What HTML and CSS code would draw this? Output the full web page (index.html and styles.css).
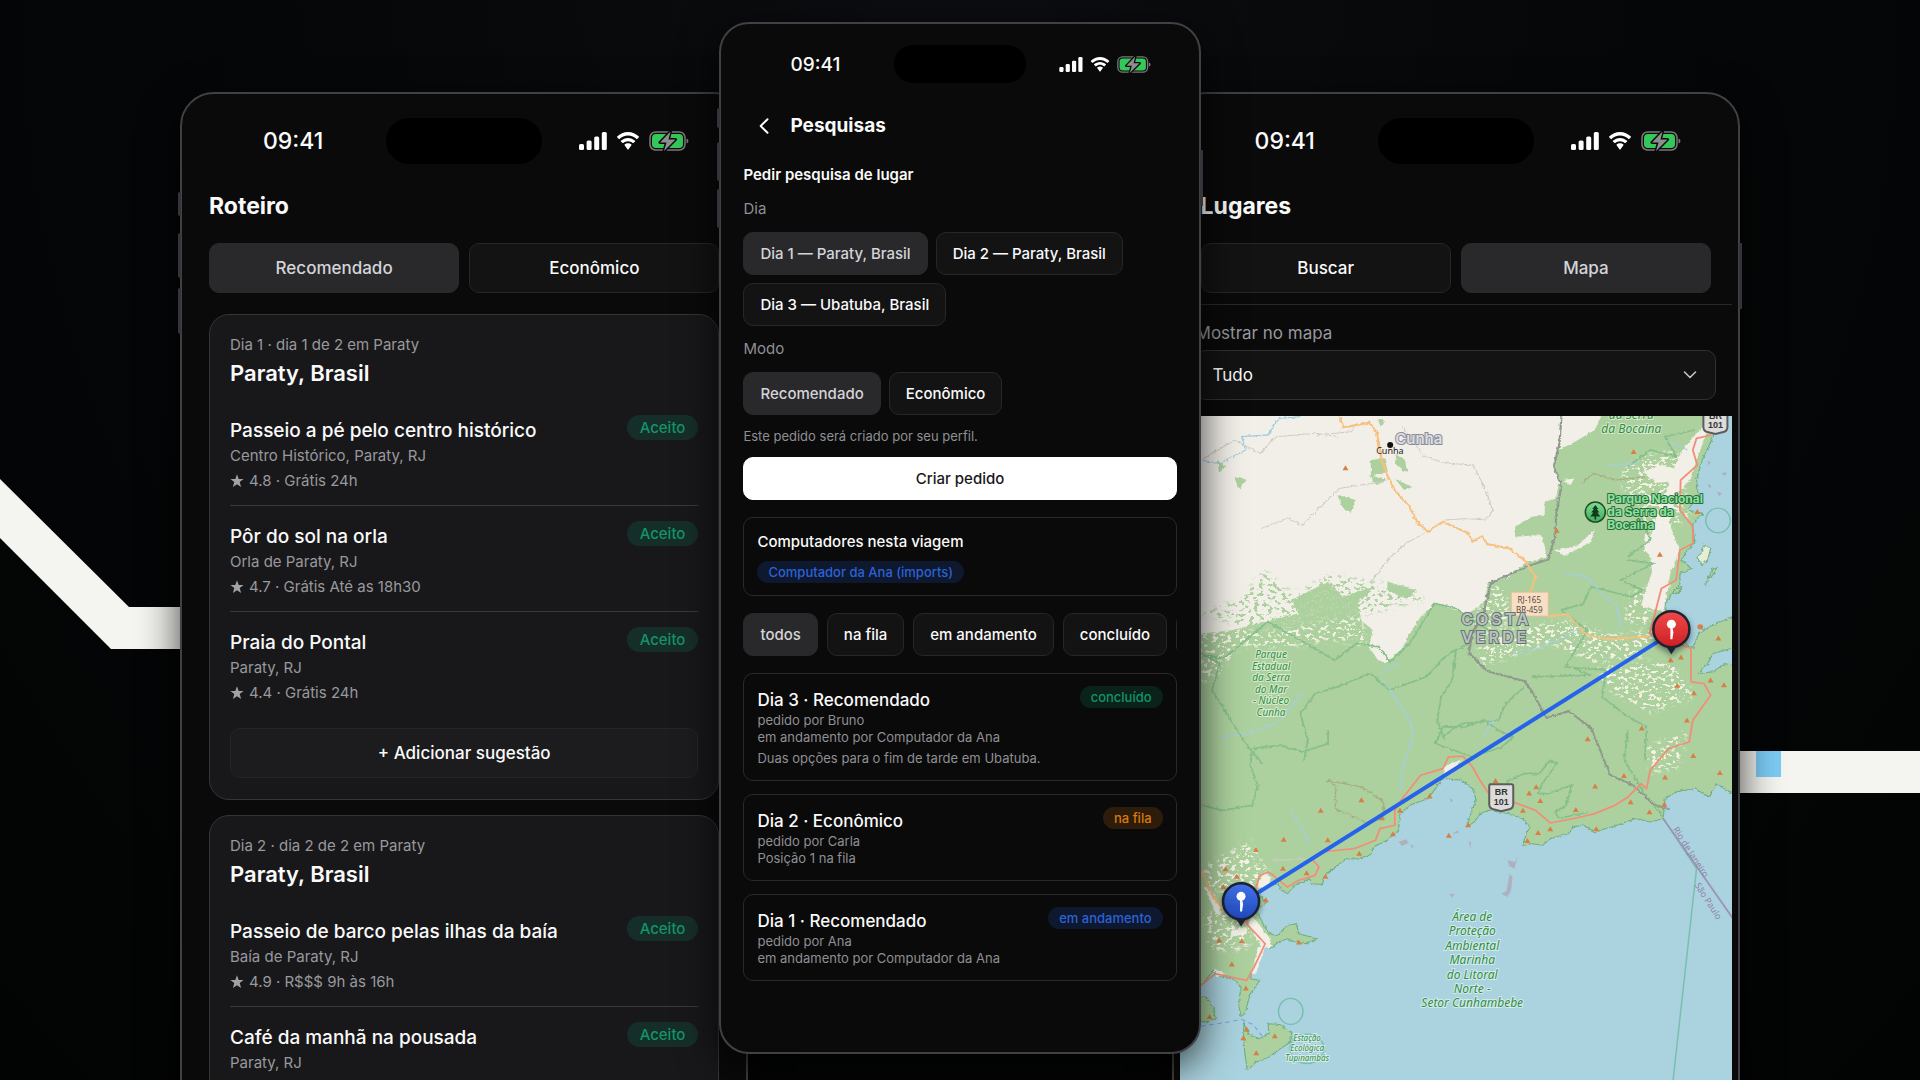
FILE: index.html
```html
<!DOCTYPE html>
<html lang="pt-BR">
<head>
<meta charset="utf-8">
<meta name="viewport" content="width=device-width, initial-scale=1">
<title>Roteiro, Pesquisas e Lugares</title>
<link rel="stylesheet" href="styles.css">
</head>
<body>
<svg class="defs" width="0" height="0" aria-hidden="true">
  <symbol id="signal" viewBox="0 0 28 18">
    <rect x="0" y="12" width="5" height="6" rx="1.5"/><rect x="7.600" y="8.500" width="5" height="9.500" rx="1.500"/><rect x="15.200" y="4.500" width="5" height="13.500" rx="1.500"/><rect x="22.800" y="0" width="5" height="18" rx="1.500"/>
  </symbol>
  <symbol id="wifi" viewBox="0 0 24 18">
    <path d="M12 3.600c3.300 0 6.300 1.300 8.500 3.400.2.200.5.200.7 0l1.700-1.700c.2-.2.2-.5 0-.7C20 1.800 16.200 0 12 0S4 1.800 1.100 4.600c-.2.200-.2.500 0 .7L2.800 7c.2.200.5.200.7 0C5.700 4.900 8.700 3.600 12 3.600zM12 9.300c1.800 0 3.400.7 4.700 1.800.2.200.5.200.7 0l1.700-1.700c.2-.2.2-.5 0-.7-1.900-1.700-4.400-2.800-7.100-2.800s-5.200 1.100-7.100 2.800c-.2.200-.2.500 0 .7l1.700 1.700c.2.200.5.200.7 0 1.300-1.100 2.900-1.800 4.700-1.800zM15.400 12.600c.2.200.2.500 0 .7l-3 4.200c-.2.200-.6.200-.8 0l-3-4.200c-.2-.2-.2-.5 0-.7.900-.8 2.100-1.300 3.400-1.300s2.500.5 3.400 1.300z"/>
  </symbol>
  <symbol id="battery" viewBox="0 0 40 20">
    <rect x="1" y="1" width="35" height="18" rx="5.500" fill="none" stroke="#7a7a7c" stroke-width="1.500"/>
    <path d="M37.500 7.500c1.300.4 1.900 1.300 1.900 2.500s-.6 2.100-1.900 2.500z" fill="#7a7a7c"/>
    <rect x="3" y="3" width="31" height="14" rx="3.800" fill="#34c759"/>
    <path d="M21.500.5l-10.500 11h6.500l-2.500 8.500 11.500-11.500h-7z" fill="#8d8d90" stroke="#0a0a0a" stroke-width="3" paint-order="stroke" stroke-linejoin="round"/>
  </symbol>
  <symbol id="star" viewBox="0 0 14 14">
    <path d="M7 .3l1.700 4.600 4.900.2-3.900 3 1.400 4.800L7 10.200l-4.100 2.700 1.400-4.800-3.900-3 4.900-.2z"/>
  </symbol>
</svg>

<main class="scene">
  <svg class="ribbon ribbon-left" viewBox="0 0 960 1080" aria-hidden="true">
    <path d="M0 479L129 607H960V649H111L0 538z" fill="#f4f5f0"/>
  </svg>
  <svg class="ribbon ribbon-right" viewBox="0 0 960 1080" aria-hidden="true">
    <path d="M0 751H960V793H0z" fill="#f4f5f0"/><path d="M796 751h25v26h-25z" fill="#7ccbf5"/>
  </svg>

  <div class="stage">
    <section class="phone side itinerary" aria-label="Roteiro">
      <i class="key key-a"></i><i class="key key-b"></i><i class="key key-c"></i>
      <div class="status">
        <span class="time">09:41</span><span class="island"></span>
        <span class="icons"><svg class="i-signal"><use href="#signal"/></svg><svg class="i-wifi"><use href="#wifi"/></svg><svg class="i-battery"><use href="#battery"/></svg></span>
      </div>
      <h1 class="title">Roteiro</h1>
      <div class="tabs"><button class="btn on" type="button">Recomendado</button><button class="btn" type="button">Econômico</button></div>

      <article class="day">
        <p class="muted">Dia 1 · dia 1 de 2 em Paraty</p>
        <h2>Paraty, Brasil</h2>
        <ul>
          <li><div><h3>Passeio a pé pelo centro histórico</h3><p class="muted">Centro Histórico, Paraty, RJ</p><p class="muted rate"><svg><use href="#star"/></svg>4.8 · Grátis 24h</p></div><span class="badge green">Aceito</span></li>
          <li><div><h3>Pôr do sol na orla</h3><p class="muted">Orla de Paraty, RJ</p><p class="muted rate"><svg><use href="#star"/></svg>4.7 · Grátis Até as 18h30</p></div><span class="badge green">Aceito</span></li>
          <li><div><h3>Praia do Pontal</h3><p class="muted">Paraty, RJ</p><p class="muted rate"><svg><use href="#star"/></svg>4.4 · Grátis 24h</p></div><span class="badge green">Aceito</span></li>
        </ul>
        <button class="btn add" type="button">+ Adicionar sugestão</button>
      </article>
      <article class="day">
        <p class="muted">Dia 2 · dia 2 de 2 em Paraty</p>
        <h2>Paraty, Brasil</h2>
        <ul>
          <li><div><h3>Passeio de barco pelas ilhas da baía</h3><p class="muted">Baía de Paraty, RJ</p><p class="muted rate"><svg><use href="#star"/></svg>4.9 · R$$$ 9h às 16h</p></div><span class="badge green">Aceito</span></li>
          <li><div><h3>Café da manhã na pousada</h3><p class="muted">Paraty, RJ</p></div><span class="badge green">Aceito</span></li>
        </ul>
      </article>
    </section>

    <section class="phone front" aria-label="Pesquisas">
      <i class="key key-a"></i><i class="key key-b"></i><i class="key key-c"></i><i class="key key-d"></i>
      <div class="status">
        <span class="time">09:41</span><span class="island"></span>
        <span class="icons"><svg class="i-signal"><use href="#signal"/></svg><svg class="i-wifi"><use href="#wifi"/></svg><svg class="i-battery"><use href="#battery"/></svg></span>
      </div>
      <header class="bar">
        <button class="back" type="button" aria-label="Voltar"><svg viewBox="0 0 10 16"><path d="M8.500 1.200L1.700 8l6.800 6.800" fill="none" stroke="#fff" stroke-width="2" stroke-linecap="round" stroke-linejoin="round"/></svg></button>
        <h1>Pesquisas</h1>
      </header>
      <h2 class="ask">Pedir pesquisa de lugar</h2>
      <p class="label">Dia</p>
      <div class="chips"><button class="btn on" type="button">Dia 1 — Paraty, Brasil</button><button class="btn" type="button">Dia 2 — Paraty, Brasil</button><button class="btn" type="button">Dia 3 — Ubatuba, Brasil</button></div>
      <p class="label">Modo</p>
      <div class="chips"><button class="btn on" type="button">Recomendado</button><button class="btn" type="button">Econômico</button></div>
      <p class="note">Este pedido será criado por seu perfil.</p>
      <button class="btn primary" type="button">Criar pedido</button>
      <article class="box machines"><h3>Computadores nesta viagem</h3><span class="badge blue">Computador da Ana (imports)</span></article>
      <div class="chips filters"><button class="btn on" type="button">todos</button><button class="btn" type="button">na fila</button><button class="btn" type="button">em andamento</button><button class="btn" type="button">concluído</button><button class="btn" type="button" aria-label="Mais filtros"></button></div>
      <div class="requests">
        <article class="box request"><div><h3>Dia 3 · Recomendado</h3><p>pedido por Bruno</p><p>em andamento por Computador da Ana</p><p class="result">Duas opções para o fim de tarde em Ubatuba.</p></div><span class="badge green">concluído</span></article>
        <article class="box request"><div><h3>Dia 2 · Econômico</h3><p>pedido por Carla</p><p>Posição 1 na fila</p></div><span class="badge orange">na fila</span></article>
        <article class="box request"><div><h3>Dia 1 · Recomendado</h3><p>pedido por Ana</p><p>em andamento por Computador da Ana</p></div><span class="badge blue">em andamento</span></article>
      </div>
    </section>

    <section class="phone side places" aria-label="Lugares">
      <i class="key key-e"></i>
      <div class="status">
        <span class="time">09:41</span><span class="island"></span>
        <span class="icons"><svg class="i-signal"><use href="#signal"/></svg><svg class="i-wifi"><use href="#wifi"/></svg><svg class="i-battery"><use href="#battery"/></svg></span>
      </div>
      <h1 class="title">Lugares</h1>
      <div class="tabs"><button class="btn" type="button">Buscar</button><button class="btn on" type="button">Mapa</button></div>
      <div class="filter">
        <label for="show">Mostrar no mapa</label>
        <div class="pick"><select id="show"><option>Tudo</option></select><svg viewBox="0 0 14 8"><path d="M1.500 1L7 6.500 12.500 1" fill="none" stroke="#c4c4c8" stroke-width="1.600" stroke-linecap="round" stroke-linejoin="round"/></svg></div>
      </div>
      <svg class="map" viewBox="0 0 552 756" preserveAspectRatio="xMinYMin slice" role="img" aria-label="Mapa de Paraty e Ubatuba">
        <defs>
          <filter id="rough" x="-5%" y="-5%" width="110%" height="110%"><feTurbulence type="fractalNoise" baseFrequency=".1" numOctaves="3" seed="4"/><feDisplacementMap in="SourceGraphic" scale="10" xChannelSelector="R" yChannelSelector="G"/></filter>
          <filter id="speckle" x="-10%" y="-10%" width="120%" height="120%"><feGaussianBlur in="SourceGraphic" stdDeviation="6" result="b"/><feTurbulence type="fractalNoise" baseFrequency=".08 .1" numOctaves="3" seed="8" result="n"/><feColorMatrix in="n" type="matrix" values="0 0 0 0 0  0 0 0 0 0  0 0 0 0 0  14 0 0 0 -7.800" result="m"/><feComposite in="b" in2="m" operator="in"/></filter>
          <linearGradient id="red" x2="0" y2="1"><stop stop-color="#ee4a48"/><stop offset="1" stop-color="#cf2024"/></linearGradient>
          <linearGradient id="blue" x2="0" y2="1"><stop stop-color="#4373ea"/><stop offset="1" stop-color="#1f49bd"/></linearGradient>
          <linearGradient id="park" x2="0" y2="1"><stop stop-color="#7fdc8f"/><stop offset="1" stop-color="#3fae5b"/></linearGradient>
          <filter id="drop" x="-50%" y="-50%" width="200%" height="200%"><feDropShadow dx="0" dy="3" stdDeviation="3" flood-opacity=".45"/></filter>
        </defs>
        <rect width="552" height="756" fill="#aad3df"/>
        <g transform="scale(.37 .33333) translate(0 -48)">
          <g filter="url(#rough)">
            <path class="land" d="M-20 20H1450L1440 110 1410 180 1395 240 1400 290 1370 330 1412 340 1385 370 1390 430 1370 450 1355 480 1380 505 1350 520 1350 555 1330 580 1310 610 1315 640 1345 700 1370 735 1385 745 1400 700 1430 680 1520 635V735L1440 760 1425 790 1400 820 1440 815 1470 790 1520 800V1170L1492 1180 1470 1165 1450 1150 1430 1190 1390 1165 1340 1175 1310 1195 1305 1255 1270 1265 1230 1255 1180 1275 1120 1295 1090 1275 1060 1280 1050 1300 1000 1315 980 1335 950 1330 925 1335 935 1300 945 1280 925 1255 890 1240 835 1230 810 1240 795 1265 775 1278 785 1240 800 1200 790 1165 760 1140 710 1135 690 1165 670 1195 620 1215 595 1240 590 1290 560 1320 530 1335 510 1365 480 1375 450 1375 420 1400 390 1425 385 1452 357 1450 350 1435 310 1455 290 1480 275 1470 265 1450 230 1460 210 1480 235 1505 205 1530 225 1570 240 1600 265 1605 290 1575 315 1570 320 1600 370 1615 340 1630 310 1625 290 1615 265 1625 245 1645 230 1640 205 1680 190 1735 215 1740 190 1780 175 1840 165 1848 158 1810 165 1760 140 1732 95 1725 90 1710 57 1755-20 1755z"/>
            <path class="land" d="M-20 1790L70 1790 90 1820 95 1855 70 1865-20 1845zM172 1865L185 1900 215 1915 240 1900 238 1870 270 1872 302 1895 298 1925 270 1945 240 1970 205 1985 182 2010 175 1960 172 1910z"/>
            <path fill="#e7ecd2" class="isle" d="M1415 435l18 10-8 35-14 15-16-25 12-10z"/>
            <path class="land" d="M1335 568l20-6-6 16-18 4zM1425 535l15-30 10-2-14 26zM1418 548l8-6-6 14z"/>
            <path class="cream" d="M-20 20H1150L1120 90 1060 130 1020 150 1010 190 1025 240 1015 295 985 305 985 345 950 350 905 380 905 410 975 405 985 440 990 470 930 490 890 530 830 550 825 600 780 640 730 625 690 610 650 650 620 700 600 745 555 788 535 780 510 740 520 690 490 660 480 610 520 560 440 590 400 545 300 600 320 640 240 660 140 690-20 710z"/>
            <path class="cream" d="M1250 215l50-22 50 20-10 30-50 5zM1350 160l60-80 20-5-30 90-20 70-40 50-20 80 30 90-25 60-20 120-60-20 30-100-10-80 20-80 20-60zM1010 450l60-10 50-50-10 35-70 42zM1255 400l45 20-30 50-15-20zM1285 545l40 5-25 60-15-20zM1035 240l30-5-10 20z"/>
            <path class="cream" d="M205 1460l25-45 15 15-8 35zM195 1545l45 65 10 30-25 5-40-70zM210 1640l20 0-25 80-12 0zM712 1098l50-20-35 45-15 8zM92 1705l30 15-25 12zM65 1460l15 0 30 60-10 25zM140 1590l40-10 0 20-45 10z"/>
            <path class="wood" d="M515 180l38-5 8 40-45 15zM425 285l50 15-15 40-20-15zM585 165l20 10 10 40-15-5-20-20zM580 235l45 25-20 10zM145 230l35 10-20 25zM100 180l25 20-20 15zM560 545l80 25-30 25-50-25zM510 225l50 15-30 15zM535 55l20 10-15 15z"/>
          </g>
          <g filter="url(#speckle)" fill="#f5f2e4">
            <path d="M57 690L200 600 300 640 400 540 480 600 510 740 420 720 300 740 160 740 100 830 57 850zM830 560l40-5 30 100-50 40-60-20zM800 700l240-40 120 40 130-10-30 80-140 20-120-60-190 70zM1130 800l200-20 60 110-120 50-130-80zM1180 230l60-60 100-20 40 200-100 60zM1210 580l90-30-40 130-60-20zM60 1400l130-80 60 120-90 60-80-40zM60 1540l150-30-30 140-100 0zM1260 1040l110-50-20 110-80 20z"/>
          </g>
          <g filter="url(#speckle)" fill="#add19e"><path d="M57 640l110-50 60-80 80 70 100-60 200 40 60 40-150 40-300 60z"/></g>

          <g class="rough-lines" filter="url(#rough)" fill="none">
            <path class="park" d="M57 760l60 15 120-110 80 50 100 65 60-50 60 10 30 45 50-50 40-70 30-55 60 15 35 30 50 35M57 760l50 30-20 80 90 160 45 60M1210 200l60-50 70 20-30-60 80-20M1210 470l60-50-30-90M1210 480l70 10-90 50 60 30-30 20-110-30-20 50-60 20 70 60-60 110 110 10-10 80 70 60 50 30-5 100M780 730l-55 30-60 70-100 40-50-50-90 40-60 20-40 60 20 80-10 60M745 750l-10 90-30 50-10 70 20 60M930 860l-50 50-20 50-100 10-50 40M950 830l160-5-45-20M690 1030l20-50 60 0 50-20 40 30 40 20-30 30-80 30z"/>
            <path class="park" d="M880 1145l50-25 40 0 30-40 18 10-20 30-20 30-10 30 25 0 65-25-15 60-30 20 10 20 80-20M1210 990l-10 90 60 110 45 60M400 990l0 40-70 25-60-20-75 10-5 50 20 60-15 60-80 15-57-15"/>
            <path class="brown" d="M395 1140l25 15 0 70 80 40 50-10 0-50-60-45zM1085 250l30-30 60 20 80-10"/>
            <path class="state" d="M1030 48l-5 80-15 70 20 60-15 90 0 50-20 80-55 20-100 50-20 90-30 60-10 60 50 55 100 30 20 30 40 80 60-20 60 50 30 80 20 60 60 30 60 60 45 15"/>
            <path class="minor" d="M370 105l90-10 10-15M57 180l90-60 70 40 40-50 110-10 60 10M600 80l60 90 60 20 70 5 30 60 25 75-20 30-50-5-60 5M220 385l70-30 40 20 100-110 60-10 60-10M520 540l40-60 50-50 50-30M250 1380l120-5M200 1630l-60 15"/>
            <path class="stream" d="M57 180l50 10 70-40-10-40 70-5 30-50 60-5M1040 520l60 10 40 50 40 40 10 60M550 840l70 120 10 40-30 110-5 60M110 1010l70-10 80-30 70-90M540 820l50-30M850 950l-30 60M300 1230l50 100M900 760l70-15 110-60M1310 120l60 30M1150 195l90-5"/>
            <path class="road" d="M430 50L442 82 512 68 532 98 545 180 555 215 580 270 620 320 640 365 670 395 710 365 780 400 790 425 815 408 830 432 890 445 935 485 960 530 945 580M990 650L1045 642 1100 705 1160 718 1270 708M57 1410L90 1490 120 1530"/>
          </g>
          <path class="trunk" fill="none" d="M1435 105L1395 115 1385 150 1397 195 1352 240 1350 330 1385 380 1385 430 1350 450 1340 540 1300 565 1285 630 1268 700 1380 745 1380 845 1415 850 1433 885 1385 960 1375 1025 1320 1045 1270 1110 1260 1165 1245 1150 1210 1190 1175 1215 1120 1240 1070 1253 1000 1268 960 1230 900 1205 840 1190 810 1140 790 1100 765 1068 725 1070 710 1105 650 1125 600 1195 580 1230 580 1275 540 1285 528 1320 470 1345 380 1355 360 1380 375 1400 365 1425 320 1440 290 1460 240 1415 215 1425 205 1465 180 1530 180 1570 230 1630 200 1700 180 1740 95 1720 57 1755"/>
          <g fill="#d87f45"><path d="M447 196l-8 15h16zM1225 147l-8 15h16zM1017 383l-8 15h16zM1296 455l-8 15h16zM1397 327l-8 15h16zM1454 706l-8 15h16zM1325 771l-8 15h16zM1353 763l-8 15h16zM1343 848l-8 15h16zM1388 870l-8 15h16zM1433 832l-8 15h16zM1469 846l-8 15h16zM1369 952l-8 15h16zM1247 976l-8 15h16zM1101 1008l-8 15h16zM490 1191l-8 15h16zM380 1222l-8 15h16zM280 1309l-8 15h16zM205 1340l-8 15h16zM399 1311l-8 15h16zM484 1351l-8 15h16zM123 1398l-8 15h16zM153 1420l-8 15h16zM278 1396l-8 15h16zM342 1410l-8 15h16zM393 1420l-8 15h16zM117 1451l-8 15h16zM232 1491l-8 15h16zM106 1611l-8 15h16zM167 1613l-8 15h16zM321 1617l-8 15h16zM140 1683l-8 15h16zM178 1755l-8 15h16zM545 1245l-8 15h16zM594 1222l-8 15h16zM575 1293l-8 15h16zM674 1180l-8 15h16zM852 1133l-8 15h16zM943 1171l-8 15h16zM962 1152l-8 15h16zM973 1193l-8 15h16zM926 1222l-8 15h16zM1000 1278l-8 15h16zM967 1289l-8 15h16zM938 1313l-8 15h16zM1069 1220l-8 15h16zM1124 1278l-8 15h16zM1121 1150l-8 15h16zM1199 1118l-8 15h16zM1310 1123l-8 15h16zM1386 1058l-8 15h16zM1458 1109l-8 15h16zM1217 1197l-8 15h16zM1268 1227l-8 15h16zM1308 1204l-8 15h16zM778 1266l-8 15h16zM726 1297l-8 15h16zM180 1878l-8 15h16zM171 1904l-8 15h16zM256 1898l-8 15h16zM206 1949l-8 15h16zM80 1841l-8 15h16z"/><circle cx="1405" cy="680" r="8"/></g>
          <g fill="#b1a1b0" opacity=".7"><path d="M590 1325l20-8 8 10-18 10zM622 1332l10 6-6 6zM728 1195l10 4-6 8zM885 1380l20 5 8-20-10 40-14-8zM890 1420l8 10-4 40-10 20-16-10 14-8zM728 1480l14 2-8 10zM780 1322l6 4-2 20zM735 1300l15-10 2 8zM1425 180l8 8-6 8zM1462 220l14-4-4 12zM1425 250l10 8-6 8zM1450 275l14 4-8 10z"/></g>
          <g class="sea" fill="none"><path d="M1305 1255l90 150-65 650"/><path class="border" d="M1305 1255l195 310"/><ellipse cx="299" cy="1833" rx="33" ry="39"/><ellipse cx="1453" cy="361" rx="33" ry="37"/><ellipse cx="343" cy="1945" rx="46" ry="44"/><path class="ferry" d="M57 1877l50-8 60-12 30 15 25 35"/></g>
        </g>

        <path d="M61 487L491 217" stroke="#2563eb" stroke-width="4" fill="none"/>

        <circle cx="210" cy="29" r="3" fill="#111"/>
        <text class="city" x="196" y="38">Cunha</text>
        <text class="town" x="215" y="28">Cunha</text>
        <g class="nature mid"><text x="451" y="3">da Serra</text><text x="451" y="17">da Bocaina</text></g>
        <g class="nature small"><text x="91" y="242">Parque</text><text x="91" y="254">Estadual</text><text x="91" y="265">da Serra</text><text x="91" y="277">do Mar</text><text x="91" y="288">- Núcleo</text><text x="91" y="300">Cunha</text></g>
        <g class="nature mid"><text x="292" y="505">Área de</text><text x="292" y="519">Proteção</text><text x="292" y="534">Ambiental</text><text x="292" y="548">Marinha</text><text x="292" y="563">do Litoral</text><text x="292" y="577">Norte -</text><text x="292" y="591">Setor Cunhambebe</text></g>
        <g class="nature tiny"><text x="127" y="625">Estação</text><text x="127" y="635">Ecológica</text><text x="127" y="645">Tupinambás</text></g>
        <g class="limit"><text transform="translate(492 413) rotate(57)">Rio de Janeiro</text><text transform="translate(514 469) rotate(57)">São Paulo</text></g>
        <rect x="331" y="176" width="37" height="24" fill="#f7dfc5" stroke="#e3bd97"/>
        <g class="ref"><text x="349" y="187">RJ-165</text><text x="349" y="197">BR-459</text></g>
        <g class="region"><text x="281" y="209">COSTA</text><text x="281" y="227">VERDE</text></g>
        <g id="shield"><path d="M310 368h21q2 0 2 2v18q0 4-4 5l-8 2-8-2q-4-1-4-5v-18q0-2 1-2z" fill="#dcdcdc" stroke="#5c5c5c" stroke-width="2"/></g>
        <g class="br"><text x="321" y="379">BR</text><text x="321" y="389">101</text></g>
        <use href="#shield" x="214" y="-377"/>
        <g class="br"><text x="535" y="3">BR</text><text x="535" y="12">101</text></g>
        <circle cx="415" cy="96" r="10" fill="url(#park)" stroke="#1d4b2b" stroke-width="1.500"/>
        <path d="M415 89l3 4h-1.500l2.500 3.500H417l3 4h-4.200v3h-1.600v-3H410l3-4h-2l2.500-3.500H412z" fill="#123a1e"/>
        <g class="parkname"><text x="427" y="87">Parque Nacional</text><text x="427" y="100">da Serra da</text><text x="427" y="113">Bocaina</text></g>

        <g filter="url(#drop)"><path d="M485 229h12l-6 9z" fill="#1b2233"/><circle cx="491" cy="213" r="18" fill="url(#red)" stroke="#1b2233" stroke-width="2.500"/></g>
        <circle cx="491" cy="208" r="4.500" fill="#fff"/><path d="M490 211h2l1 5-1 7h-2z" fill="#fff"/>
        <g filter="url(#drop)"><path d="M55 501h12l-6 9z" fill="#1b2233"/><circle cx="61" cy="485" r="18" fill="url(#blue)" stroke="#1b2233" stroke-width="2.500"/></g>
        <circle cx="61" cy="480" r="4.500" fill="#fff"/><path d="M60 483h2l1 5-1 7h-2z" fill="#fff"/>
      </svg>
    </section>
  </div>
</main>
</body>
</html>
```
FILE: styles.css
```css
* { box-sizing: border-box; }
body, h1, h2, h3, p, ul { margin: 0; padding: 0; }
body { background: #040506; color: #fafafa; font-family: Inter, "Liberation Sans", sans-serif; }
button, select { font: inherit; color: inherit; }
ul { list-style: none; }
.defs { position: absolute; }

.scene {
  position: relative;
  height: 100vh;
  overflow: hidden;
  background: radial-gradient(ellipse at 50% 0, #0b0d10 0, #050607 55%, #020303 100%);
}
.ribbon { position: absolute; top: 0; width: 50%; }
.ribbon-left { left: 0; }
.ribbon-right { right: 0; }

.stage { position: relative; display: flex; align-items: flex-start; width: 81.25%; margin: 0 auto; }

/* Phone shells */
.phone {
  position: relative;
  min-width: 0;
  background: #0a0a0a;
  border: 2px solid #414145;
  box-shadow: 0 12px 40px rgba(0, 0, 0, .75);
}
.side { flex: 568 1 0; min-height: 100vh; margin-top: 92px; padding: 24px 27px 0; border-radius: 34px 34px 0 0; }
.front { z-index: 1; flex: 482 1 0; margin: 22px -29px 0; padding: 21px 22px 71px; border-radius: 30px; }

.key { position: absolute; left: -4px; width: 3px; background: #34343a; border-radius: 2px 0 0 2px; }
.side .key-a { top: 98px; height: 24px; }
.side .key-b { top: 139px; height: 45px; }
.side .key-c { top: 194px; height: 46px; }
.front .key-a { top: 84px; height: 20px; }
.front .key-b { top: 118px; height: 39px; }
.front .key-c { top: 165px; height: 39px; }
.key-d { left: auto; right: -4px; top: 126px; height: 56px; }
.key-e { left: auto; right: -4px; top: 149px; height: 66px; }

.status { display: grid; grid-template-columns: 1fr auto 1fr; align-items: center; }
.time { font-weight: 500; }
.island { background: #000; border-radius: 24px; }
.icons { display: flex; align-items: center; justify-content: flex-end; fill: #fff; }
.side .time { padding-left: 54px; font-size: 23px; }
.side .island { width: 156px; height: 46px; }
.side .icons { gap: 9px; padding-right: 30px; }
.side .i-signal { width: 28px; height: 18px; }
.side .i-wifi { width: 24px; height: 18px; }
.side .i-battery { width: 40px; height: 20px; }
.front .time { padding-left: 47px; font-size: 19px; }
.front .island { width: 132px; height: 38px; }
.front .icons { gap: 7px; padding-right: 26px; }
.front .i-signal { width: 24px; height: 15px; }
.front .i-wifi { width: 20px; height: 15px; }
.front .i-battery { width: 34px; height: 17px; }

/* Shared controls */
.btn { border: 1px solid #27272a; border-radius: 10px; background: #131314; font-weight: 500; white-space: nowrap; }
.btn.on { border-color: #29292c; background: #29292c; color: #d4d4d8; }
.badge { flex: none; border-radius: 13px; font-weight: 500; }
.green { background: rgba(16, 185, 129, .14); color: #129468; }
.blue { background: rgba(37, 99, 235, .16); color: #2c62d6; }
.orange { background: rgba(217, 119, 6, .17); color: #d67a10; }

/* Side phones */
.title { margin-top: 26px; font-size: 23px; line-height: 32px; font-weight: 700; }
.tabs { display: flex; gap: 10px; margin-top: 21px; }
.tabs .btn { flex: 1; height: 50px; font-size: 17px; }

.day { margin-top: 21px; padding: 18px 20px 21px; border: 1px solid #353538; border-radius: 20px; background: #18181b; }
.day + .day { margin-top: 15px; }
.muted { color: #98989d; font-size: 15px; line-height: 24px; }
.day h2 { margin-bottom: 11px; font-size: 22px; line-height: 32px; font-weight: 600; }
.day li { display: flex; justify-content: space-between; align-items: flex-start; padding: 15px 0 11px; }
.day li + li { border-top: 1px solid #3a3a3d; }
.day li div { padding-top: 3px; }
.day h3 { font-size: 19px; line-height: 26px; font-weight: 500; }
.day .rate { display: flex; align-items: center; gap: 5px; line-height: 26px; }
.rate svg { width: 14px; height: 14px; fill: #a1a1a6; }
.day .badge { padding: 0 13px; font-size: 15px; line-height: 25px; }
.add { width: 100%; height: 50px; margin-top: 11px; border-color: #252528; background: #1c1c1f; font-size: 17px; }

/* Front phone */
.bar { display: flex; align-items: center; margin-top: 30px; }
.back { width: 47px; height: 26px; padding: 0 0 0 16px; border: 0; background: none; }
.back svg { display: block; width: 10px; height: 16px; }
.bar h1 { font-size: 19px; line-height: 26px; font-weight: 700; }
.ask { margin-top: 25px; font-size: 15px; line-height: 22px; font-weight: 600; }
.label { margin: 12px 0; color: #8f8f94; font-size: 15px; line-height: 22px; }
.chips { display: flex; flex-wrap: wrap; gap: 8px; }
.front .btn { height: 43px; padding: 0 16px; font-size: 15px; }
.note { margin: 12px 0; color: #8f8f94; font-size: 13px; line-height: 18px; }
.front .primary { width: 100%; border-color: #fff; background: #fff; color: #18181b; }
.front .badge { padding: 0 11px; font-size: 13px; line-height: 22px; }
.box { border: 1px solid #29292c; border-radius: 10px; }
.machines { margin: 17px 0; padding: 12px 13px; }
.machines h3 { margin-bottom: 7px; font-size: 15px; line-height: 24px; font-weight: 500; }
.machines .badge { display: inline-block; vertical-align: top; }
.filters { flex-wrap: nowrap; gap: 9px; overflow: hidden; }
.filters .btn { flex: none; }
.requests { display: grid; gap: 13px; margin-top: 17px; }
.request { display: flex; justify-content: space-between; align-items: flex-start; padding: 12px 13px 13px; }
.request div { padding-top: 3px; }
.request h3 { margin-bottom: 1px; font-size: 17px; line-height: 22px; font-weight: 500; }
.request p { color: #8f8f94; font-size: 13px; line-height: 17px; }
.request .result { margin-top: 4px; }

/* Map phone */
.places { display: flex; flex-direction: column; }
.filter { margin: 11px -21px 0; padding: 16px 16px 16px; border-top: 1px solid #29292c; }
.filter label { display: block; margin-bottom: 5px; color: #98989d; font-size: 17px; line-height: 24px; }
.pick { position: relative; }
.pick select { display: block; width: 100%; height: 50px; padding: 0 16px; border: 1px solid #303034; border-radius: 10px; background: #131314; font-size: 17px; appearance: none; }
.pick svg { position: absolute; right: 19px; top: 21px; width: 14px; height: 8px; }
.map { display: block; flex: 1 0 756px; width: auto; min-height: 756px; margin: 0 -21px; }

.land { fill: #add19e; stroke: #6fae83; stroke-width: 3; }
.isle { stroke: #6fae83; stroke-width: 3; }
.cream { fill: #f2efe9; }
.wood { fill: #add19e; }
.park { stroke: #86bf8b; stroke-width: 5; }
.brown { stroke: #a3b082; stroke-width: 4; }
.state { stroke: #8f9a8c; stroke-width: 6; }
.minor { stroke: #cfccc8; stroke-width: 3; }
.stream { stroke: #a3cfdc; stroke-width: 4; }
.road { stroke: #f7c07d; stroke-width: 6; }
.trunk { stroke: #f08f78; stroke-width: 5; stroke-linejoin: round; }
.sea { stroke: #78bfae; stroke-width: 4; }
.sea .border { stroke: #9d94b4; stroke-width: 5; }
.sea .ferry { stroke: #7d9de0; stroke-width: 3; stroke-dasharray: 12 10; }

.map text { font-family: "Noto Sans", sans-serif; }
.map .city { font-size: 9px; fill: #222; }
.map .town { font-family: Inter, sans-serif; font-size: 15px; font-weight: 600; fill: #dcdde3; stroke: #8b8d99; stroke-width: 2px; paint-order: stroke; }
.nature text { font-style: italic; text-anchor: middle; fill: #2e8f3c; stroke: rgba(255, 255, 255, .5); stroke-width: 2px; paint-order: stroke; }
.nature.mid text { font-size: 12px; }
.nature.small text { font-size: 10px; }
.nature.tiny text { font-size: 8px; }
.limit text { font-size: 9px; fill: #9282ab; }
.ref text { font-size: 8px; text-anchor: middle; fill: #574a3c; }
.map .region text { font-family: Inter, sans-serif; font-size: 16px; font-weight: 600; letter-spacing: 3px; fill: #b9c4bd; stroke: #68727a; stroke-width: 2px; paint-order: stroke; }
.map .br text { font-family: "Liberation Sans", sans-serif; font-size: 9px; font-weight: 700; text-anchor: middle; fill: #333; }
.map .parkname text { font-family: Inter, sans-serif; font-size: 12px; font-weight: 700; fill: #8ce29c; stroke: #2a6b3f; stroke-width: 2px; paint-order: stroke; stroke-linejoin: round; }
```
